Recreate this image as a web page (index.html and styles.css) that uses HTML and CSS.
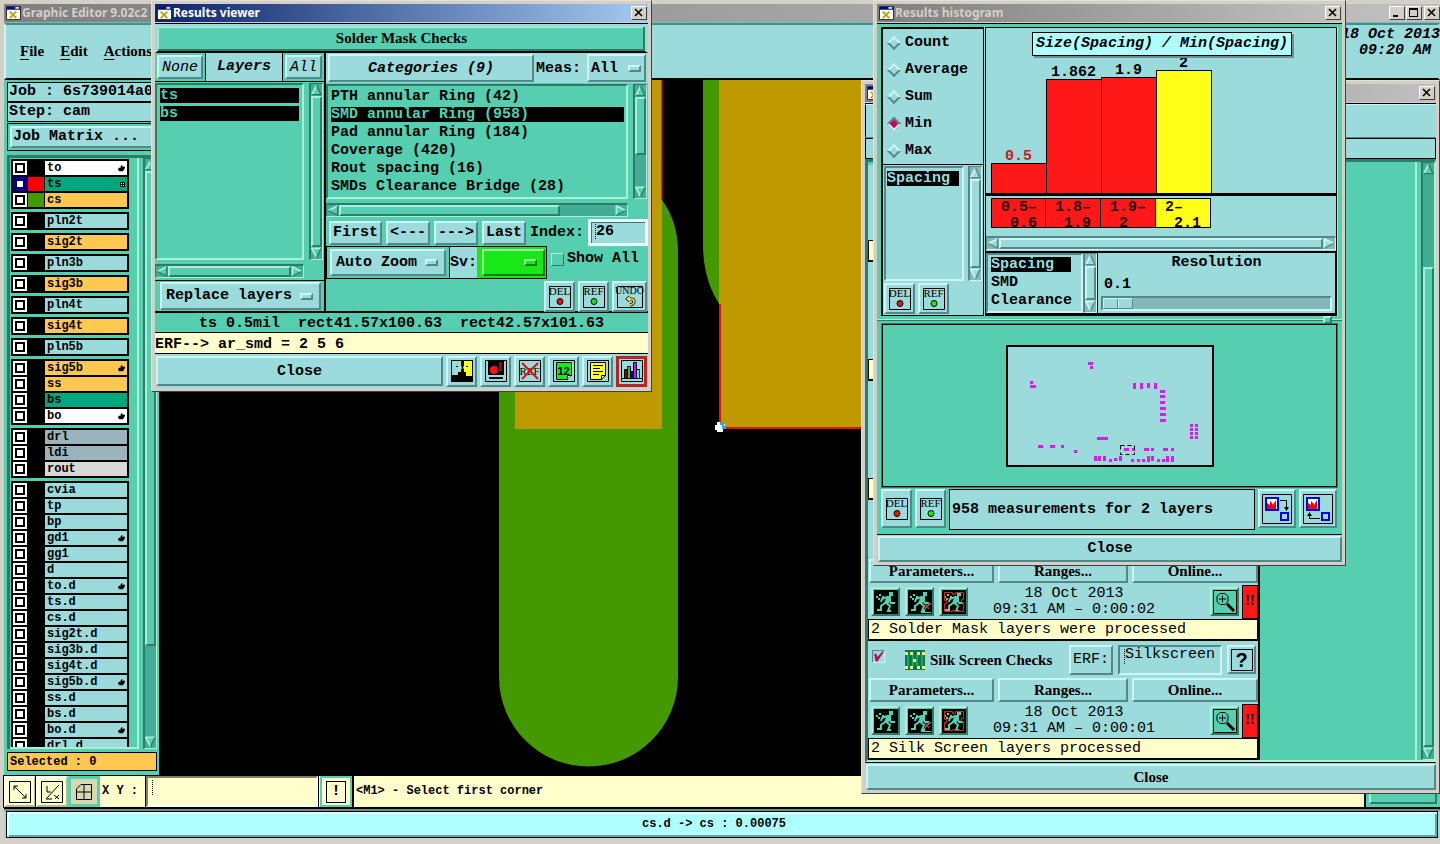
FILE: index.html
```html
<!DOCTYPE html>
<html lang="en">
<head>
<meta charset="utf-8">
<title>Graphic Editor</title>
<link rel="stylesheet" href="styles.css">
</head>
<body>
<svg class="defs" aria-hidden="true">
  <symbol id="up" viewBox="0 0 12 12"><path d="M6 1 1 11h10z" fill="var(--face)"/><path d="M6 1 1 11" stroke="var(--light)" stroke-width="2"/><path d="M6 1l5 10H1" stroke="var(--dark)" stroke-width="1.5" fill="none"/></symbol>
  <symbol id="down" viewBox="0 0 12 12"><path d="M6 11 1 1h10z" fill="var(--face)"/><path d="M11 1H1l5 10" stroke="var(--light)" stroke-width="2" fill="none"/><path d="M11 1 6 11" stroke="var(--dark)" stroke-width="1.5"/></symbol>
  <symbol id="left" viewBox="0 0 12 12"><path d="M1 6 11 1v10z" fill="var(--face)"/><path d="M1 6 11 1" stroke="var(--light)" stroke-width="2"/><path d="M11 1v10L1 6" stroke="var(--dark)" stroke-width="1.5" fill="none"/></symbol>
  <symbol id="right" viewBox="0 0 12 12"><path d="M11 6 1 1v10z" fill="var(--face)"/><path d="M1 11V1l10 5" stroke="var(--light)" stroke-width="2" fill="none"/><path d="M11 6 1 11" stroke="var(--dark)" stroke-width="1.5"/></symbol>
  <symbol id="app" viewBox="0 0 16 16"><path fill="#fff" stroke="#222" d="M.5.5h15v14H.5z"/><path fill="#00107c" d="M1 1h14v3H1z"/><path fill="#ddd" d="M10 1h4v2h-4z"/><path stroke="#b5a800" stroke-width="2" d="m4 6 7 7M11 6l-7 7"/></symbol>
  <symbol id="x" viewBox="0 0 10 10"><path stroke="#000" stroke-width="1.6" d="m1 1 7 7M8 1 1 8"/></symbol>
  <symbol id="hand" viewBox="0 0 8 8"><path d="M4 0h1v2h3v2H7v2H6v1H1V6H0V4h1V3h2V1h1z"/></symbol>
  <symbol id="grid" viewBox="0 0 5 5"><path fill="#000" d="M0 0h5v5H0z"/><path fill="#bfffdf" d="M1 1h1v1H1zM3 1h1v1H3zM1 3h1v1H1zM3 3h1v1H3z"/></symbol>
  <symbol id="dot" viewBox="0 0 22 22"><path fill="none" stroke="#000" d="M.5.5h21v21H.5z"/><circle cx="11" cy="15.500" r="3" fill="currentColor" stroke="#000"/></symbol>
  <symbol id="undo" viewBox="0 0 26 22"><path fill="none" stroke="#000" d="M.5.5h25v21H.5z"/><path d="M13 10.500 10.500 13l2.500 2M11 13h3q3 0 3 2.500t-4 3.500" fill="none" stroke="#000" stroke-width="3"/><path d="M13 10.500 10.500 13l2.500 2M11 13h3q3 0 3 2.500t-4 3.500" fill="none" stroke="#ffef50" stroke-width="1.500"/></symbol>
  <symbol id="faces" viewBox="0 0 22 22"><path d="M0 0h22v22H0z"/><path fill="#9bdbdb" d="M1 1h9v4l1 3-1 2v2H7v3H1z"/><path fill="#ff2" d="M13 1h8v15h-6v-4h-2v-3l-1-1 1-3z"/><path d="M5 6h2v1H5zM15 6h2v1h-2z"/></symbol>
  <symbol id="disk" viewBox="0 0 22 22"><path fill="#9bdbdb" stroke="#000" d="M.5.5h21v21H.5z"/><path d="M3 1h16v14H3zM4 17h14v2H4z"/><circle cx="9" cy="10" r="4" fill="#f11"/><path fill="#a00" d="M14 2h3v9h-6v-1h3z"/></symbol>
  <symbol id="cross" viewBox="0 0 22 22"><path fill="none" stroke="#000" d="M.5.5h21v21H.5z"/><path d="m3 3 16 16M19 3 3 19" stroke="#d11" stroke-width="2"/></symbol>
  <symbol id="num" viewBox="0 0 22 22"><path fill="none" stroke="#000" d="M.5.5h21v21H.5z"/><path fill="#1e1" stroke="#000" d="M3.500 2.500h15v13l-4 4h-11z"/><path fill="#fff" stroke="#000" d="M14.500 19.500v-4h4"/></symbol>
  <symbol id="note" viewBox="0 0 22 22"><path fill="none" stroke="#000" d="M.5.5h21v21H.5z"/><path fill="#ff2" stroke="#000" d="M3.500 2.500h15v13l-4 4h-11z"/><path stroke="#000" d="M6 5.500h10M6 8.500h7M6 11.500h10M6 14.500h6M14.500 19.500v-4h4" fill="none"/></symbol>
  <symbol id="bars" viewBox="0 0 22 22"><path fill="none" stroke="#000" d="M.5.5h21v21H.5z"/><path d="M1 18.500h20" stroke="#000"/><path stroke="#000" fill="#800" d="M3.500 9.500h3v9h-3z"/><path stroke="#000" fill="#1c4" d="M6.500 6.500h3v12h-3z"/><path stroke="#000" fill="#00a" d="M9.500 11.500h3v7h-3z"/><path stroke="#000" fill="#c1e" d="M12.500 2.500h3v16h-3z"/><path stroke="#000" fill="#3ee" d="M15.500 9.500h3v9h-3z"/></symbol>
  <symbol id="toMap" viewBox="0 0 30 30"><path fill="none" stroke="#000" d="M.5.5h29v29H.5z"/><path fill="#fff" stroke="#00e" stroke-width="2" d="M4 4h12v12H4z"/><path fill="#e00" d="M5 15V9l3 2V7l2 2 1 2 3-5v9z"/><path fill="#9bdbdb" stroke="#00e" stroke-width="2" d="M19 19h7v7h-7z"/><path d="M18 6.500h6.500V14" fill="none" stroke="#000"/><path d="M22 13h5l-2.500 4z"/></symbol>
  <symbol id="fromMap" viewBox="0 0 30 30"><path fill="none" stroke="#000" d="M.5.5h29v29H.5z"/><path fill="#fff" stroke="#00e" stroke-width="2" d="M4 4h12v12H4z"/><path fill="#e00" d="M5 15V9l3 2V7l2 2 1 2 3-5v9z"/><path fill="#9bdbdb" stroke="#00e" stroke-width="2" d="M19 19h7v7h-7z"/><path d="M17 24.500H6.500V21" fill="none" stroke="#000"/><path d="M4 22h5l-2.500-4z"/></symbol>
  <symbol id="run" viewBox="0 0 24 24"><path d="M0 0h24v24H0z"/><path fill="#55cfb0" d="M15 2h4v4h-4zM13 6h4v4l-3 4-4-1zM2 6h2v2H2zM5 4h2v2H5zM4 8h2v2H4zM8 6h2v2H8z"/><path d="m13 7-5 2-1 3M15 9l2 4h4M11 12l5 4-2 5h3M11 13l-4 3v4H3" fill="none" stroke="#55cfb0" stroke-width="2"/></symbol>
  <symbol id="runSel" viewBox="0 0 24 24"><use href="#run"/><path d="M13 22.500h10M14 22l9-9" fill="none" stroke="#55cfb0"/><path d="m17 14 4 5M21 14l-4 4" stroke="#d22" stroke-width="1.500"/></symbol>
  <symbol id="runAll" viewBox="0 0 24 24"><use href="#run"/><path d="M2.500 2.500h8v2h3v-2h8v7h-2v3h2v9h-8v-1h-3v1h-8v-8h2v-3h-2z" fill="none" stroke="#d22"/></symbol>
  <symbol id="mag" viewBox="0 0 24 24"><path fill="none" stroke="#000" d="M.5.5h23v23H.5z"/><path d="M7 3.500h5l3 3v5l-3 3H7l-3-3v-5z" fill="none" stroke="#000"/><path d="M6 9h7M9.500 5.500v7" stroke="#000"/><path d="m14 14 7 7" stroke="#000" stroke-width="3"/></symbol>
</svg>

<main class="desktop">
  <section class="editor teal">
    <header class="title off"><svg class="appicon"><use href="#app"/></svg><span class="grow">Graphic Editor 9.02c2 (</span>
      <button class="cap" aria-label="Minimize"><svg viewBox="0 0 10 10"><path d="M1 7h5v2H1z"/></svg></button><button class="cap" aria-label="Maximize"><svg viewBox="0 0 10 10"><path d="M0 0h9v9H0zM1 2v6h7V2z" fill-rule="evenodd"/></svg></button><button class="cap gap" aria-label="Close editor"><svg><use href="#x"/></svg></button></header>
    <nav class="menubar cyan"><a href="#"><u>F</u>ile</a><a href="#"><u>E</u>dit</a><a href="#"><u>A</u>ctions</a><time class="clock">18 Oct 2013<br>09:20 AM&nbsp;</time></nav>
    <div class="work">
      <aside class="side">
        <div class="job">Job : 6s739014a0</div>
        <div class="job">Step: cam</div>
        <div class="matrix"><button class="btn cyan">Job Matrix ...</button></div>
        <div class="layerbox">
          <div class="layers">
            <div class="grp">
              <label><input type="checkbox"><i></i><span class="w">to<svg><use href="#hand"/></svg></span></label>
              <label><input type="checkbox" checked><i class="red"></i><span class="g">ts<svg class="dots"><use href="#grid"/></svg></span></label>
              <label><input type="checkbox"><i class="grn"></i><span class="o">cs</span></label>
            </div>
            <div class="grp"><label><input type="checkbox"><i></i><span>pln2t</span></label></div>
            <div class="grp"><label><input type="checkbox"><i></i><span class="o">sig2t</span></label></div>
            <div class="grp"><label><input type="checkbox"><i></i><span>pln3b</span></label></div>
            <div class="grp"><label><input type="checkbox"><i></i><span class="o">sig3b</span></label></div>
            <div class="grp"><label><input type="checkbox"><i></i><span>pln4t</span></label></div>
            <div class="grp"><label><input type="checkbox"><i></i><span class="o">sig4t</span></label></div>
            <div class="grp"><label><input type="checkbox"><i></i><span>pln5b</span></label></div>
            <div class="grp">
              <label><input type="checkbox"><i></i><span class="o">sig5b<svg><use href="#hand"/></svg></span></label>
              <label><input type="checkbox"><i></i><span class="o">ss</span></label>
              <label><input type="checkbox"><i></i><span class="g">bs</span></label>
              <label><input type="checkbox"><i></i><span class="w">bo<svg><use href="#hand"/></svg></span></label>
            </div>
            <div class="grp">
              <label><input type="checkbox"><i></i><span class="s">drl</span></label>
              <label><input type="checkbox"><i></i><span class="s">ldi</span></label>
              <label><input type="checkbox"><i></i><span class="l">rout</span></label>
            </div>
            <div class="grp">
              <label><input type="checkbox"><i></i><span>cvia</span></label>
              <label><input type="checkbox"><i></i><span>tp</span></label>
              <label><input type="checkbox"><i></i><span>bp</span></label>
              <label><input type="checkbox"><i></i><span>gd1<svg><use href="#hand"/></svg></span></label>
              <label><input type="checkbox"><i></i><span>gg1</span></label>
              <label><input type="checkbox"><i></i><span>d</span></label>
              <label><input type="checkbox"><i></i><span>to.d<svg><use href="#hand"/></svg></span></label>
              <label><input type="checkbox"><i></i><span>ts.d</span></label>
              <label><input type="checkbox"><i></i><span>cs.d</span></label>
              <label><input type="checkbox"><i></i><span>sig2t.d</span></label>
              <label><input type="checkbox"><i></i><span>sig3b.d</span></label>
              <label><input type="checkbox"><i></i><span>sig4t.d</span></label>
              <label><input type="checkbox"><i></i><span>sig5b.d<svg><use href="#hand"/></svg></span></label>
              <label><input type="checkbox"><i></i><span>ss.d</span></label>
              <label><input type="checkbox"><i></i><span>bs.d</span></label>
              <label><input type="checkbox"><i></i><span>bo.d<svg><use href="#hand"/></svg></span></label>
              <label><input type="checkbox"><i></i><span>drl.d</span></label>
            </div>
          </div>
          <div class="sb v"><svg><use href="#up"/></svg><div class="track"><b style="height:84%"></b></div><svg><use href="#down"/></svg></div>
        </div>
        <div class="selected">Selected : 0</div>
      </aside>
      <svg class="canvas" viewBox="159 80 1281 696" preserveAspectRatio="xMinYMin slice" role="img" aria-label="Board view">
        <path fill="#490" d="M499 392V677a89.500 89.500 0 0 0 179 0V252Q678 222 662 200V80H499z"/>
        <path fill="#bf9900" d="M515 80h147v349H515z"/><path fill="#e01818" d="M661 80h1.500v120H661z"/>
        <path fill="#490" d="M703 80h17v225Q703 280 703 244z"/>
        <path fill="#bf9900" d="M719 80h150v348H719z"/><path d="M720 304V428h150" fill="none" stroke="#e81010" stroke-width="2"/>
        <path fill="#fff" d="M717 422h6v2h2v5h-2v3h-6v-2h-2v-5h2z"/><path fill="#29a9e8" d="M720 422h4v4h2v3h-4v-4h-2z"/>
      </svg>
    </div>
    <div class="toolbar">
      <button class="tool" aria-label="Zoom"><svg viewBox="0 0 22 22"><path fill="none" stroke="#000" d="M.5.5h21v21H.5zM5 5l12 12M5 9V5h4M17 13v4h-4"/></svg></button>
      <button class="tool" aria-label="Angle"><svg viewBox="0 0 22 22"><path fill="none" stroke="#000" d="M.5.5h21v21H.5zM5 18 18 4M6 5v6h4M5 18h6M13 14l5 4M18 14l-4 4"/></svg></button>
      <button class="tool on" aria-label="Grid"><svg viewBox="0 0 22 22"><path fill="none" stroke="#000" d="M8 3.500h10.500v15h-15V8zM11 3.500v15M3.500 11h15"/></svg></button>
      <label class="xy" for="xy">X Y :</label>
      <input id="xy" class="xyin caret" type="text">
      <button class="bang"><span>!</span></button>
      <p class="msg">&lt;M1&gt; - Select first corner</p>
      <span class="tail"><span></span></span>
    </div>
    <div class="status"><p>cs.d -&gt; cs : 0.00075</p></div>
  </section>

  <section class="win analysis">
    <header class="title off"><svg class="appicon"><use href="#app"/></svg><span class="grow"></span><button class="cap" aria-label="Close checklist"><svg><use href="#x"/></svg></button></header>
    <div class="content cyan">
      <div class="ahead"></div><div class="arow"></div>
      <div class="ascroll teal">
        <div class="items">
          <div class="item cyan blank"><p class="result"></p></div>
          <div class="item cyan blank"><p class="result"></p></div>
          <div class="item cyan blank"><p class="result"></p></div>
          <div class="item cyan">
            <div class="ihead"></div>
            <div class="params"><button class="btn">Parameters...</button><button class="btn">Ranges...</button><button class="btn">Online...</button></div>
            <div class="runrow teal"><button class="btn" aria-label="Run"><svg><use href="#run"/></svg></button><button class="btn" aria-label="Run in area"><svg><use href="#runSel"/></svg></button><button class="btn" aria-label="Run on profile"><svg><use href="#runAll"/></svg></button><time>18 Oct 2013<br>09:31 AM – 0:00:02</time><button class="btn" aria-label="View results"><svg><use href="#mag"/></svg></button><span class="alert">!!</span></div>
            <p class="result">2 Solder Mask layers were processed</p>
          </div>
          <div class="item cyan">
            <div class="ihead"><input class="tick" type="checkbox" checked id="silk"><svg class="board" viewBox="0 0 20 20"><path fill="#087848" d="M0 0h20v20H0z"/><path stroke="#46c878" d="M3 4v12M8 4v12M12 4v12M17 4v12"/><path fill="#f0ee80" d="M0 2h3v3H0zM5 2h3v3H5zM12 2h3v3h-3zM17 2h3v3h-3zM0 16h3v3H0zM5 16h3v3H5zM12 16h3v3h-3zM17 16h3v3h-3zM8 9h3v3H8z"/></svg><label for="silk" class="iname">Silk Screen Checks</label><button class="btn erfbtn">ERF:</button><input class="erfin caret" type="text" aria-label="ERF name" value="Silkscreen"><button class="btn help"><span>?</span></button></div>
            <div class="params"><button class="btn">Parameters...</button><button class="btn">Ranges...</button><button class="btn">Online...</button></div>
            <div class="runrow teal"><button class="btn" aria-label="Run"><svg><use href="#run"/></svg></button><button class="btn" aria-label="Run in area"><svg><use href="#runSel"/></svg></button><button class="btn" aria-label="Run on profile"><svg><use href="#runAll"/></svg></button><time>18 Oct 2013<br>09:31 AM – 0:00:01</time><button class="btn" aria-label="View results"><svg><use href="#mag"/></svg></button><span class="alert">!!</span></div>
            <p class="result">2 Silk Screen layers processed</p>
          </div>
        </div>
        <div class="sb v"><svg><use href="#up"/></svg><div class="track"><b class="low"></b></div><svg><use href="#down"/></svg></div>
      </div>
      <div class="closerow"><button class="btn serif">Close</button></div>
    </div>
  </section>

  <section class="win viewer">
    <header class="title"><svg class="appicon"><use href="#app"/></svg><span class="grow">Results viewer</span><button class="cap" aria-label="Close viewer"><svg><use href="#x"/></svg></button></header>
    <div class="content teal">
      <h1 class="vhead">Solder Mask Checks</h1>
      <div class="vbody">
        <div class="vleft">
          <div class="lhead"><span class="cell"><button class="btn cyan">None</button></span><strong class="cyan">Layers</strong><span class="cell"><button class="btn cyan">All</button></span></div>
          <div class="lists">
            <ul class="list"><li class="sel">ts</li><li class="sel">bs</li></ul>
            <div class="sb v"><svg><use href="#up"/></svg><div class="track"><b></b></div><svg><use href="#down"/></svg></div>
            <div class="sb h"><svg><use href="#left"/></svg><div class="track"><b></b></div><svg><use href="#right"/></svg></div>
          </div>
          <div class="replace"><span class="opt btn cyan"><select aria-label="Layer mode"><option>Replace layers</option></select></span></div>
        </div>
        <div class="vright">
          <div class="chead cyan"><button class="btn">Categories (9)</button><label for="meas">Meas:</label><span class="opt btn"><select id="meas"><option>All</option></select></span></div>
          <div class="lists">
            <ul class="list"><li>PTH annular Ring (42)</li><li class="sel">SMD annular Ring (958)</li><li>Pad annular Ring (184)</li><li>Coverage (420)</li><li>Rout spacing (16)</li><li>SMDs Clearance Bridge (28)</li></ul>
            <div class="sb v"><svg><use href="#up"/></svg><div class="track"><b style="height:65%"></b></div><svg><use href="#down"/></svg></div>
            <div class="sb h"><svg><use href="#left"/></svg><div class="track"><b style="width:80%"></b></div><svg><use href="#right"/></svg></div>
          </div>
          <div class="nav"><button class="btn cyan">First</button><button class="btn cyan">&lt;---</button><button class="btn cyan">---&gt;</button><button class="btn cyan">Last</button><label for="idx">Index:</label><input id="idx" class="caret" type="text" value="26"></div>
          <div class="zoomrow"><span class="zcell"><span class="opt btn cyan"><select aria-label="Zoom mode"><option>Auto Zoom</option></select></span></span><span class="sv"><label for="sv" class="cyan">Sv:</label><span class="green"><span class="opt btn"><select id="sv"><option></option></select></span></span></span><label class="show"><input type="checkbox">Show All</label></div>
          <div class="icons cyan"><button class="btn pic"><svg style="color:#e11"><use href="#dot"/></svg><span>DEL</span></button><button class="btn pic"><svg style="color:#1e1"><use href="#dot"/></svg><span>REF</span></button><button class="btn pic wide"><svg><use href="#undo"/></svg><span>UNDO</span></button></div>
        </div>
      </div>
      <p class="info">ts 0.5mil  rect41.57x100.63  rect42.57x101.63</p>
      <p class="erf">ERF--&gt; ar_smd = 2 5 6</p>
      <div class="foot cyan"><button class="btn grow">Close</button>
        <button class="btn pic" aria-label="Compare"><svg><use href="#faces"/></svg></button><button class="btn pic" aria-label="Save"><svg><use href="#disk"/></svg></button><button class="btn pic mid"><span>REF</span><svg><use href="#cross"/></svg></button><button class="btn pic mid num"><svg><use href="#num"/></svg><span>12</span></button><button class="btn pic" aria-label="Report"><svg><use href="#note"/></svg></button><button class="btn pic hot" aria-label="Histogram"><svg><use href="#bars"/></svg></button></div>
    </div>
  </section>

  <section class="win histogram">
    <header class="title off"><svg class="appicon"><use href="#app"/></svg><span class="grow">Results histogram</span><button class="cap" aria-label="Close histogram"><svg><use href="#x"/></svg></button></header>
    <div class="content teal">
      <div class="htop cyan">
        <div class="hleft">
          <fieldset><label><input type="radio" name="m">Count</label><label><input type="radio" name="m">Average</label><label><input type="radio" name="m">Sum</label><label><input type="radio" name="m" checked>Min</label><label><input type="radio" name="m">Max</label></fieldset>
          <div class="hlist"><ul class="list"><li class="sel">Spacing</li></ul><div class="sb v"><svg><use href="#up"/></svg><div class="track"><b></b></div><svg><use href="#down"/></svg></div></div>
          <div class="icons"><button class="btn pic"><svg style="color:#e11"><use href="#dot"/></svg><span>DEL</span></button><button class="btn pic"><svg style="color:#1e1"><use href="#dot"/></svg><span>REF</span></button></div>
        </div>
        <div class="hright">
          <div class="chart">
            <h2>Size(Spacing) / Min(Spacing)</h2>
            <div class="plot"><div class="bar redt">0.5<b style="height:30px"></b></div><div class="bar">1.862<b style="height:114px"></b></div><div class="bar">1.9<b style="height:116px"></b></div><div class="bar yel">2<b style="height:123px"></b></div></div>
            <div class="axis"><span>0.5–<br><em>0.6</em></span><span>1.8–<br><em>1.9</em></span><span>1.9–<br><em>2</em></span><span class="yel">2–<br><em>2.1</em></span></div>
          </div>
          <div class="sb h"><svg><use href="#left"/></svg><div class="track"><b></b></div><svg><use href="#right"/></svg></div>
          <div class="res">
            <ul class="list"><li class="sel">Spacing</li><li>SMD</li><li>Clearance</li></ul>
            <div class="sb v"><svg><use href="#up"/></svg><div class="track"><b></b></div><svg><use href="#down"/></svg></div>
            <div class="slider"><label for="res">Resolution</label><output for="res">0.1</output><input id="res" type="range" min="0" max="100" value="0"></div>
          </div>
        </div>
      </div>
      <div class="sash"><i></i></div>
      <div class="map">
        <svg width="208" height="122" viewBox="0 0 208 122" role="img" aria-label="Measurement map"><path fill="#9bdbdb" stroke="#000" stroke-width="2" d="M1 1h206v120H1z"/>
        <path fill="#e018e8" d="M82 17h5v3h-5zM84 21h3v3h-3zM24 36h3v3h-3zM24 40h6v3h-6zM127 38h3v6h-3zM134 38h3v6h-3zM141 38h3v5h-3zM148 38h3v6h-3zM154 45h5v3h-5zM154 50h5v3h-5zM154 56h5v3h-5zM154 62h6v3h-6zM154 68h6v3h-6zM154 74h6v3h-6zM184 79h3v3h-3zM189 79h3v3h-3zM184 83h3v3h-3zM189 83h3v3h-3zM184 87h3v3h-3zM189 87h3v3h-3zM184 91h3v3h-3zM189 91h3v3h-3zM91 92h11v3H91zM32 100h5v3h-5zM44 100h5v3h-5zM55 100h3v3h-3zM68 105h3v3h-3zM118 103h5v3h-5zM126 103h3v3h-3zM138 103h5v3h-5zM145 103h3v3h-3zM157 103h5v3h-5zM165 103h3v3h-3zM88 111h3v5h-3zM92 111h3v5h-3zM97 111h3v5h-3zM103 114h3v3h-3zM108 113h3v3h-3zM113 111h3v5h-3zM125 114h3v3h-3zM131 114h3v3h-3zM136 114h3v3h-3zM141 111h3v6h-3zM145 111h3v5h-3zM151 114h3v3h-3zM156 114h3v3h-3zM160 111h3v6h-3zM165 111h3v6h-3z"/>
        <path d="M114.500 100.500h14v9h-14z" fill="none" stroke="#000" stroke-dasharray="4 3"/></svg>
      </div>
      <div class="meas"><button class="btn cyan pic"><svg style="color:#e11"><use href="#dot"/></svg><span>DEL</span></button><button class="btn cyan pic"><svg style="color:#1e1"><use href="#dot"/></svg><span>REF</span></button><p class="cyan">958 measurements for 2 layers</p><button class="btn cyan big" aria-label="Send to map"><svg><use href="#toMap"/></svg></button><button class="btn cyan big" aria-label="Get from map"><svg><use href="#fromMap"/></svg></button></div>
      <div class="closerow cyan"><button class="btn">Close</button></div>
    </div>
  </section>
</main>
</body>
</html>
```
FILE: styles.css
```css
*, *::before, *::after { box-sizing: border-box; }
body { margin: 0; font: bold 15px/18px "Liberation Mono", monospace; color: #000; }
p, ul, h1, h2, fieldset { margin: 0; padding: 0; border: 0; font: inherit; list-style: none; }
button, input, select { font: inherit; color: inherit; margin: 0; padding: 0; border-radius: 0; }
svg { display: block; flex: none; }
.defs { position: absolute; width: 0; height: 0; }
.grow { flex: 1; }

.teal { --face: #55cfb0; --light: #a8f0d8; --dark: #2c7c68; --trough: #43ac94; }
.cyan { --face: #9bdbdb; --light: #ccf6f6; --dark: #528888; --trough: #84b8b8; }
.content.teal, .editor { background: var(--face); }
.cyan { background: var(--face); }

.desktop { position: relative; height: 100vh; min-height: 844px; overflow: hidden; }
.btn { border: 2px solid; border-color: var(--light) var(--dark) var(--dark) var(--light); background: var(--face); display: flex; align-items: center; justify-content: center; white-space: nowrap; }
.serif { font: bold 15px/18px "Liberation Serif", serif; }
.caret { --caret: repeating-linear-gradient(#000 0 1px, #0000 1px 2px) 4px 2px / 1px 15px no-repeat; }

/* window frames */
.win { position: absolute; background: #d4d0c8; border: 1px solid; border-color: #e4e0d8 #404040 #404040 #e4e0d8; padding: 3px; display: flex; flex-direction: column; }
.viewer { left: 151px; top: 0; width: 501px; height: 392px; }
.histogram { left: 873px; top: 0; width: 473px; height: 566px; }
.analysis { left: 861px; right: 0; top: 80px; height: 714px; }
.title { height: 18px; flex: none; display: flex; align-items: center; gap: 1px; padding: 0 1px 0 2px; margin-bottom: 1px; color: #fff; background: linear-gradient(90deg, #0a246a, #a6caf0); font: bold 12px/18px "Noto Sans", sans-serif; }
.title.off { background: linear-gradient(90deg, #808080, #c0c0c0); color: #d4d0c8; }
.appicon { width: 15px; height: 15px; }
.cap { width: 16px; height: 14px; background: #d4d0c8; border: 1px solid; border-color: #fff #404040 #404040 #fff; display: grid; place-items: center; }
.cap svg { width: 10px; height: 10px; }
.content { flex: 1; min-height: 0; border-top: 1px solid #000; display: flex; flex-direction: column; }

/* scrollbars */
.sb { background: var(--trough); border: 1px solid; border-color: var(--dark) var(--light) var(--light) var(--dark); display: flex; align-items: stretch; }
.sb.v { width: 14px; flex-direction: column; border-left-width: 2px; }
.sb.h { height: 14px; border-top-width: 2px; }
.sb.v svg { width: 11px; height: 12px; }
.sb.h svg { width: 12px; height: 11px; }
.track { flex: 1; min-height: 0; display: flex; }
.track b { width: 100%; height: 100%; background: var(--face); border: 2px solid; border-color: var(--light) var(--dark) var(--dark) var(--light); }
.track b.low { height: 84%; align-self: flex-end; }
.list { border: 2px solid; border-color: var(--dark) var(--light) var(--light) var(--dark); padding: 3px; overflow: hidden; }
.list li { height: 15px; line-height: 15px; margin-bottom: 3px; white-space: nowrap; }
.list .sel { background: #000; color: var(--face); }

/* option menus */
.opt { display: grid; grid-template-columns: 1fr 20px; padding-right: 3px; line-height: 18px; }
.opt select { appearance: none; border: 0; background: none; min-width: 0; padding-left: 4px; }
.opt::after { content: ""; width: 13px; height: 7px; justify-self: center; border: 2px solid; border-color: var(--light) var(--dark) var(--dark) var(--light); }
.opt { align-items: center; }

/* icon buttons */
.pic { width: 31px; height: 31px; display: grid; place-items: center; }
.pic > * { grid-area: 1 / 1; }
.pic svg { width: 22px; height: 22px; }
.pic span { font: 11px/10px "Liberation Serif", serif; align-self: start; padding-top: 3px; width: 24px; }
.pic.mid span { align-self: center; padding: 0; }
.pic.num span { font: bold 11px/12px "Liberation Sans", sans-serif; z-index: 1; }
.pic.wide { width: 35px; }
.pic.wide svg { width: 26px; }
.pic.wide span { width: 31px; font-size: 10px; }
.pic.hot { border: 3px solid #c02020; }

/* editor */
.editor { height: 100%; min-height: 844px; padding: 4px 0 4px 4px; display: flex; flex-direction: column; border: solid #d4d0c8; border-width: 0 0 2px; box-shadow: inset 4px 0 #d4d0c8, inset 0 4px #d4d0c8, inset 0 -4px #d4d0c8; }
.editor > .title { padding-right: 0; }
.cap.gap { margin-left: 1px; }
.menubar { height: 57px; flex: none; display: flex; align-items: center; gap: 16px; padding: 0 0 2px 14px; border: 2px solid; border-color: var(--dark) var(--face) #000 var(--light); font: bold 15px/18px "Liberation Serif", serif; }
.menubar a { color: #000; text-decoration: none; }
.menubar u { text-underline-offset: 3px; }
.clock { margin-left: auto; align-self: flex-start; padding-top: 2px; margin-right: -2px; text-align: right; font: italic bold 15px/16px "Liberation Mono", monospace; }
.work { flex: 1; min-height: 0; display: grid; grid-template-columns: 155px 1fr; }
.side { display: flex; flex-direction: column; min-height: 0; padding: 2px 2px 4px 3px; }
.job { height: 20px; flex: none; border: 1px solid #000; background: #9bdbdb; padding-left: 1px; white-space: nowrap; overflow: hidden; }
.matrix { height: 28px; flex: none; margin-top: 1px; border: 1px solid #000; padding: 2px; }
.matrix .btn { width: 100%; height: 22px; justify-content: flex-start; padding-left: 1px; }
.layerbox { flex: 1; min-height: 0; margin: 4px 0 3px; display: flex; gap: 4px; border-left: 3px solid var(--dark); border-top: 3px solid var(--dark); }
.layers { flex: 1; overflow: hidden; border-right: 2px solid var(--light); border-bottom: 2px solid var(--light); display: flex; flex-direction: column; gap: 3px; padding: 1px 8px 0 1px; font-size: 12px; }
.grp { flex: none; background: #000; padding: 2px; display: grid; gap: 2px; }
.grp label { display: grid; grid-template-columns: 14px 16px 1fr; gap: 1px; height: 14px; }
.grp input { appearance: none; width: 14px; height: 14px; background: #fff; border: 2px solid #fff; box-shadow: inset 0 0 0 2px #000; }
.grp input:checked { border-color: #0000a0; box-shadow: inset 0 0 0 2px #000070; }
.grp i.red { background: #f00; }
.grp i.grn { background: #490; }
.grp span { background: #9bdbdb; line-height: 14px; padding: 0 2px; display: flex; justify-content: space-between; align-items: center; }
.grp span.w { background: #fff; }
.grp span.g { background: #00a67c; }
.grp span.o { background: #ffc850; }
.grp span.s { background: #9bb4bc; }
.grp span.l { background: #d8d8d8; }
.grp svg { width: 7px; height: 7px; }
.grp svg.dots { width: 5px; height: 5px; }
.selected { height: 19px; flex: none; border: 1px solid #000; background: #ffc850; padding-left: 2px; font-size: 12px; line-height: 18px; }
.canvas { width: 100%; height: 100%; min-height: 0; background: #000; }
.toolbar { height: 34px; flex: none; display: flex; background: #ffc; border: solid #000; border-width: 1px 0 2px; font-size: 12px; }
.tool { width: 32px; background: #ffc; border: 2px solid; border-color: #fff #b8b890 #b8b890 #fff; outline: 1px solid #000; display: grid; place-items: center; }
.tool.on { border: 3px solid #55cfb0; background: #d8d8b0; outline: 0; }
.tool svg { width: 22px; height: 22px; }
.xy { padding: 0 8px 0 2px; line-height: 31px; background: #ffc; }
.xyin { width: 172px; background: var(--caret) #ffc; border: 2px solid; border-color: #808060 #fff #fff #808060; outline: 1px solid #000; }
.bang { width: 32px; margin-left: 2px; border: 2px solid #55cfb0; background: #ffc; padding: 2px; }
.bang span { display: block; border: 1px solid #000; margin: 0 2px; line-height: 20px; font-size: 15px; }
.msg { flex: 1; border-left: 2px solid #000; padding-left: 2px; line-height: 31px; }
.tail { width: 76px; border-left: 2px solid #000; background: #55cfb0; padding: 3px; display: grid; }
.tail span { border: 2px solid; border-color: #a8f0d8 #2c7c68 #2c7c68 #a8f0d8; }
.status { height: 29px; flex: none; border-top: 2px solid #6c9090; padding: 0 2px; background: #9bdbdb; }
.status p { height: 27px; background: #b0ffff; border: 1px solid #000; box-shadow: inset 2px 2px #e0ffff, inset -2px -2px #60a8a8; text-align: center; line-height: 25px; font-size: 12px; padding-right: 16px; }

/* results viewer */
.vhead { height: 29px; flex: none; border: 3px solid #9bdbdb; border-bottom: 2px solid #000; box-shadow: inset -2px -2px #2c7c68, inset 1px 1px #a8f0d8; text-align: center; font: bold 15px/22px "Liberation Serif", serif; }
.vbody { flex: 1; min-height: 0; display: grid; grid-template-columns: 171px 1fr; border-bottom: 2px solid #000; }
.vleft { border-right: 2px solid #000; display: flex; flex-direction: column; min-height: 0; }
.lhead { height: 29px; display: grid; grid-template-columns: 50px 1fr 41px; border-bottom: 1px solid #000; font-style: italic; }
.lhead .cell { padding: 2px; display: grid; }
.lhead .btn { font-weight: normal; padding-top: 1px; }
.lhead strong { border: solid #000; border-width: 0 1px; text-align: center; line-height: 28px; }
.lists { flex: 1; min-height: 0; display: grid; grid-template-columns: 1fr 14px; grid-template-rows: 1fr 14px; gap: 4px 5px; padding: 1px 1px 2px 0; }
.replace { height: 32px; border-top: 1px solid #000; padding: 1px 3px 2px 5px; display: grid; }
.vright { display: flex; flex-direction: column; min-width: 0; }
.chead { height: 30px; display: flex; gap: 2px; padding: 1px 2px; line-height: 30px; }
.chead > button { width: 206px; font-style: italic; padding-top: 2px; }
.chead > label { width: 46px; }
.chead .opt { flex: 1; margin-left: 3px; padding-right: 2px; grid-template-columns: 1fr 16px; }
.chead select { padding: 1px 0 0 2px; }
.vright .lists { flex: none; height: 136px; }
.vright .list li { width: 293px; }
.nav { height: 27px; display: flex; gap: 4px; padding-left: 3px; align-items: center; }
.nav .btn { height: 24px; padding: 0 2px; }
.nav input { flex: 1; min-width: 0; height: 27px; background: var(--caret) #9bdbdb; border: 3px solid #e8ffff; padding: 0 0 2px 5px; box-shadow: inset 1px 1px #2c7c68; }
.zoomrow { height: 33px; display: flex; }
.zcell { width: 124px; border: 1px solid #000; padding: 2px 3px; display: grid; }
.sv { width: 97px; border: 1px solid #000; border-left: 0; display: flex; line-height: 31px; }
.green { --face: #18e818; --light: #a0ffa0; --dark: #10801c; flex: 1; background: var(--face); padding: 2px 1px 2px 5px; display: grid; }
.show { display: flex; gap: 3px; padding: 4px 0 0 4px; }
.show input { appearance: none; width: 13px; height: 13px; margin-top: 3px; border: 1px solid; border-color: #a8f0d8 #2c7c68 #2c7c68 #a8f0d8; }
.icons { display: flex; gap: 3px; }
.vright .icons { background: none; justify-content: flex-end; padding: 2px 1px 0; }
.info { height: 20px; padding-left: 44px; border-bottom: 1px solid #000; white-space: pre; line-height: 21px; }
.erf { height: 21px; background: #ffc; border-bottom: 1px solid #000; line-height: 23px; }
.foot { height: 34px; display: flex; gap: 3px; padding: 2px 1px; align-items: center; }
.foot .grow { height: 30px; padding-top: 2px; }

/* histogram */
.htop { height: 289px; flex: none; margin: 3px 4px 0; display: grid; grid-template-columns: 103px 1fr; border-right: 1px solid #a8f0d8; }
.hleft { border: 2px solid #000; border-width: 2px 1px 1px 2px; display: flex; flex-direction: column; min-height: 0; }
fieldset { border-bottom: 1px solid #000; }
fieldset label { display: flex; align-items: center; gap: 4px; height: 27px; padding-left: 4px; }
fieldset input { appearance: none; width: 10px; height: 10px; margin: 0 2px; border: 2px solid; transform: rotate(45deg); border-color: var(--light) var(--dark) var(--dark) var(--light); }
fieldset input:checked { background: #d00050; border-color: var(--dark) var(--light) var(--light) var(--dark); }
.hlist { flex: 1; min-height: 0; display: grid; grid-template-columns: 1fr 14px; gap: 4px; padding: 1px; }
.hlist .list { padding-left: 1px; }
.hleft .icons { padding: 1px 0 1px 1px; }
.hright { display: flex; flex-direction: column; min-width: 0; margin-left: 1px; border: 1px solid #000; border-bottom-width: 2px; }
.chart { position: relative; flex: 1; display: flex; flex-direction: column; }
.chart h2 { position: absolute; left: 46px; top: 4px; padding: 0 3px; background: #b0ffff; border: 1px solid #000; box-shadow: 2px 2px #6c9090; font: italic bold 15px/22px "Liberation Mono", monospace; white-space: nowrap; }
.plot { height: 168px; display: flex; align-items: flex-end; padding-left: 5px; border-bottom: 3px solid #000; }
.bar { width: 55px; text-align: center; line-height: 12px; }
.bar b { display: block; background: #ff1818; border: 1px solid #000; border-bottom: 0; margin-right: -1px; }
.bar.redt { color: #c81c1c; }
.bar.yel b, .axis .yel { background: #ffff18; }
.axis { display: flex; padding: 2px 0 0 5px; height: 32px; }
.axis span { width: 55px; background: #ff1818; border: 1px solid #000; padding: 1px 0 0 9px; line-height: 17px; line-height: 16px; color: #280000; }
.axis span + span { border-left: 0; }
.axis em { font-style: normal; padding-left: 9px; }
.res { height: 63px; border: 2px solid #000; border-width: 2px 1px 1px 0; margin-top: 1px; display: grid; grid-template-columns: 97px 14px 1fr; }
.res .list { padding-top: 2px; }
.res .list li { width: 80px; }
.slider { border-left: 1px solid #000; padding: 1px 3px 2px; display: flex; flex-direction: column; }
.slider label { text-align: center; }
.slider output { padding: 4px 0 2px 3px; }
.slider input { appearance: none; width: 100%; height: 15px; background: var(--trough); border: 2px solid; border-color: var(--dark) var(--light) var(--light) var(--dark); }
.slider input::-webkit-slider-thumb { appearance: none; width: 30px; height: 11px; background: linear-gradient(90deg, #9bdbdb 13px, #528888 13px 14px, #ccf6f6 14px 15px, #9bdbdb 15px); border: 1px solid; border-color: #ccf6f6 #528888 #528888 #ccf6f6; }
.sash { height: 8px; flex: none; display: flex; justify-content: flex-end; padding-right: 10px; background: linear-gradient(#55cfb0 3px, #a8f0d8 3px 4px, #2c7c68 4px 5px, #55cfb0 5px); }
.sash i { width: 9px; height: 8px; background: #55cfb0; border: 2px solid; border-color: #a8f0d8 #2c7c68 #2c7c68 #a8f0d8; }
.map { flex: 1; margin: 0 5px; border: 1px solid #000; outline: 1px solid #2c7c68; display: grid; place-items: center; }
.meas { height: 47px; flex: none; display: flex; gap: 3px; padding: 2px 5px 4px 4px; }
.meas .pic { height: 39px; }
.meas .pic span { padding-top: 7px; }
.meas p { flex: 1; border: 1px solid #000; padding-left: 2px; line-height: 40px; }
.big { width: 38px; height: 39px; }
.big svg { width: 30px; height: 30px; }
.closerow { height: 28px; flex: none; border-top: 1px solid #000; padding: 1px 0 0 1px; display: grid; }

/* checklist window */
.ahead { height: 34px; flex: none; border: 1px solid #000; border-color: #ccf6f6 #9bdbdb #528888 #000; }
.arow { height: 21px; flex: none; border: 1px solid #000; }
.ascroll { flex: 1; min-height: 0; background: var(--face); display: flex; gap: 4px; border: solid; border-width: 3px 1px 2px 3px; border-color: var(--dark) var(--light) var(--light) var(--dark); }
.items { flex: 1; overflow: hidden; border-right: 2px solid var(--light); display: flex; flex-direction: column; justify-content: flex-end; align-items: flex-start; }
.item { width: 392px; height: 119px; flex: none; display: grid; grid-template-rows: 37px 25px 35px 22px; border-right: 2px solid #000; }
.item.blank { grid-template-rows: 1fr 22px; align-items: end; }
.ihead { display: flex; align-items: center; padding: 0 2px 0 4px; font: bold 15px/18px "Liberation Serif", serif; }
.tick { appearance: none; width: 13px; height: 13px; align-self: flex-start; margin: 9px 20px 0 0; border: 1px solid; border-color: #528888 #ccf6f6 #ccf6f6 #528888; display: grid; }
.tick:checked::before { content: ""; background: #c00050; clip-path: polygon(10% 25%, 30% 25%, 40% 55%, 85% 5%, 100% 5%, 40% 95%, 25% 95%); }
.board { width: 20px; height: 20px; }
.iname { flex: 1; padding-left: 5px; }
.erfbtn { width: 44px; height: 30px; font: 15px/18px "Liberation Mono", monospace; }
.erfin { width: 104px; height: 30px; margin: 0 5px; background: var(--caret) #9bdbdb; border: 2px solid; border-color: #528888 #ccf6f6 #ccf6f6 #528888; padding: 0 0 10px 5px; font: 15px/16px "Liberation Mono", monospace; }
.help { width: 29px; height: 29px; }
.help span { width: 22px; height: 22px; border: 1px solid #000; font: bold 20px/21px "Liberation Sans", sans-serif; }
.params { display: grid; grid-template-columns: 125px 130px 126px; gap: 4px; padding-left: 1px; height: 24px; }
.params .btn { font: bold 15px/18px "Liberation Serif", serif; }
.runrow { display: flex; align-items: center; gap: 5px; padding-left: 3px; }
.runrow .btn { width: 29px; height: 29px; }
.runrow svg { width: 24px; height: 24px; }
.runrow time { flex: 1; text-align: center; font-weight: normal; line-height: 16px; margin-right: 30px; }
.alert { width: 16px; height: 34px; margin-left: -2px; background: #ff1818; border: 1px solid #000; text-align: center; font: bold 14px/30px "Liberation Serif", serif; }
.result { height: 22px; background: #ffc; border: 1px solid #000; border-bottom-width: 2px; padding-left: 2px; font-weight: normal; line-height: 20px; white-space: nowrap; }
```
